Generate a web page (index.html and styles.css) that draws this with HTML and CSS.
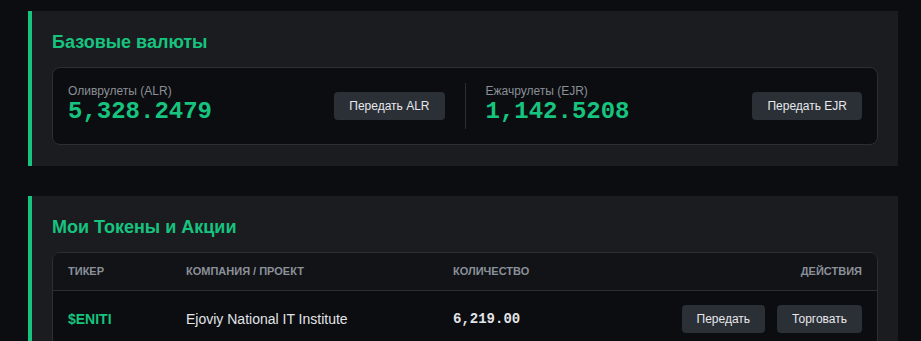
FILE: index.html
```html
<!DOCTYPE html>
<html lang="ru">
<head>
    <meta charset="UTF-8">
    <meta name="viewport" content="width=device-width, initial-scale=1.0">
    <title>Кошелёк</title>
    <link rel="stylesheet" href="styles.css">
</head>
<body>
    <div class="wallet">
        <section class="panel">
            <h2>Базовые валюты</h2>
            <div class="currency-card">
                <div class="currency">
                    <div>
                        <div class="currency-label">Оливрулеты (ALR)</div>
                        <div class="currency-value">5,328.2479</div>
                    </div>
                    <button class="btn">Передать ALR</button>
                </div>
                <div class="divider"></div>
                <div class="currency">
                    <div>
                        <div class="currency-label">Ежачрулеты (EJR)</div>
                        <div class="currency-value">1,142.5208</div>
                    </div>
                    <button class="btn">Передать EJR</button>
                </div>
            </div>
        </section>

        <section class="panel">
            <h2>Мои Токены и Акции</h2>
            <div class="table-wrap">
                <table class="tokens">
                    <thead>
                        <tr>
                            <th class="col-ticker">Тикер</th>
                            <th class="col-company">Компания / Проект</th>
                            <th class="col-amount">Количество</th>
                            <th class="col-actions">Действия</th>
                        </tr>
                    </thead>
                    <tbody>
                        <tr>
                            <td class="ticker">$ENITI</td>
                            <td>Ejoviy National IT Institute</td>
                            <td class="amount">6,219.00</td>
                            <td>
                                <div class="actions">
                                    <button class="btn">Передать</button>
                                    <button class="btn">Торговать</button>
                                </div>
                            </td>
                        </tr>
                    </tbody>
                </table>
            </div>
        </section>
    </div>
</body>
</html>
```

FILE: styles.css
```css
body {
    margin: 0;
    padding: 11px 23px 20px 28px;
    background-color: #0b0d10;
    font-family: "Liberation Sans", Arial, sans-serif;
    color: #e2e4e8;
}
.wallet {
    display: flex;
    flex-direction: column;
    gap: 30px;
}
.panel {
    background-color: #1b1c20;
    border-left: 4px solid #16c47f; /* зелёный */
    padding: 20px 20px 21px;
}
.panel h2 {
    margin: 0 0 14px;
    font-size: 18px;
    line-height: 22px;
    font-weight: bold;
    color: #16c47f;
}
.currency-card {
    display: flex;
    align-items: stretch;
    background-color: #0b0d10;
    border: 1px solid #2b2e34;
    border-radius: 8px;
    padding: 15px;
}
.currency {
    flex: 1;
    display: flex;
    justify-content: space-between;
    align-items: center;
}
.divider {
    width: 1px;
    background-color: #2b2e34;
    margin: 0 20px;
}
.currency-label {
    font-size: 12px;
    line-height: 16px;
    color: #8b8f96;
}
.currency-value {
    font-family: "Liberation Mono", "Courier New", monospace;
    font-weight: bold;
    font-size: 24px;
    line-height: 26px;
    margin-bottom: 4px;
    color: #16c47f;
}
.btn {
    font-family: "Liberation Sans", Arial, sans-serif;
    font-size: 12px;
    line-height: 16px;
    padding: 6px 15px;
    background-color: #2b2f36;
    color: #e6e8eb;
    border: none;
    border-radius: 4px;
    cursor: pointer;
}
.btn:hover {
    background-color: #363b43;
}
.table-wrap {
    border: 1px solid #2b2e34;
    border-radius: 8px;
    overflow: hidden;
    background-color: #0b0d10;
}
.tokens {
    width: 100%;
    border-collapse: collapse;
    table-layout: fixed;
}
.tokens th {
    background-color: #111317;
    color: #8b9099;
    font-size: 11px;
    line-height: 13px;
    font-weight: bold;
    text-transform: uppercase;
    text-align: left;
    padding: 12px 15px;
    border-bottom: 1px solid #2b2e34;
}
.tokens td {
    font-size: 14px;
    line-height: 28px;
    padding: 14px 15px;
    border-bottom: 1px solid #1f2227;
}
.col-ticker { width: 88px; }
.col-company { width: 237px; }
.col-amount { width: 170px; }
.tokens .col-actions { text-align: right; }
.actions {
    display: flex;
    justify-content: flex-end;
    gap: 12px;
}
.ticker {
    color: #16c47f;
    font-weight: bold;
}
.amount {
    font-family: "Liberation Mono", "Courier New", monospace;
    font-weight: bold;
    font-size: 16px;
}
```
